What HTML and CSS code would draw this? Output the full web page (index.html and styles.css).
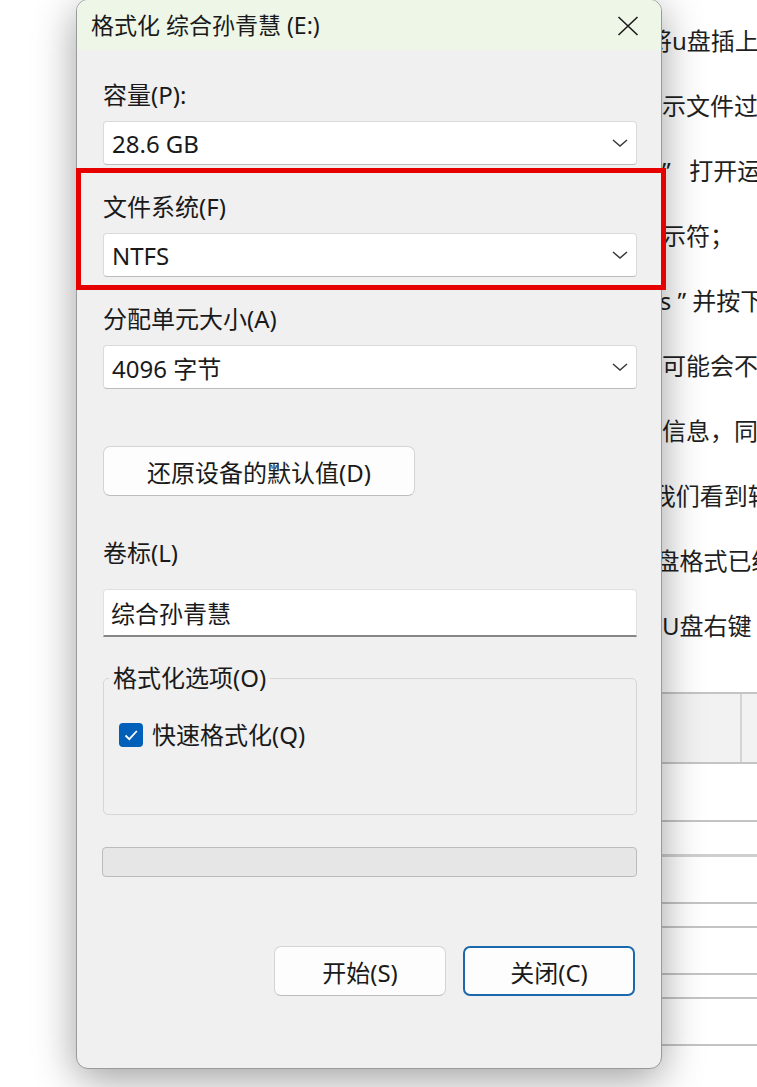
FILE: index.html
```html
<!DOCTYPE html>
<html lang="zh-CN">
<head>
  <meta charset="UTF-8">
  <meta name="viewport" content="width=device-width, initial-scale=1.0">
  <title>格式化 综合孙青慧 (E:)</title>
  <link rel="stylesheet" href="styles.css">
</head>
<body>
  <div class="article">
    <p class="line line--back">1 将u盘插上电脑</p>
    <p class="line">显示文件过程</p>
    <p class="line">命”&nbsp;&nbsp; 打开运行窗口</p>
    <p class="line">提示符；</p>
    <p class="line line--back">ntfs ” 并按下回车</p>
    <p class="line">时可能会不会</p>
    <p class="line">的信息，同时</p>
    <p class="line">2我们看到转换</p>
    <p class="line">U盘格式已经</p>
    <p class="line">击U盘右键</p>

    <div class="table">
      <div class="row row--head">
        <div class="cell"></div>
        <div class="cell cell--last"></div>
      </div>
      <div class="row row--first"></div>
      <div class="row row--second"></div>
      <div class="row row--tall"></div>
      <div class="row row--short"></div>
      <div class="row row--tall"></div>
      <div class="row row--short"></div>
      <div class="row row--tall"></div>
    </div>
  </div>

  <div class="dialog">
    <div class="titlebar">
      <span class="title">格式化 综合孙青慧 (E:)</span>
      <svg class="close" width="22" height="20" viewBox="0 0 22 20">
        <path d="M1.5 1 L20.5 19 M20.5 1 L1.5 19" stroke="#1c1c1c" stroke-width="1.6" fill="none"/>
      </svg>
    </div>

    <div class="body">
      <p class="label">容量(P):</p>
      <div class="select">
        <span>28.6 GB</span>
        <svg width="16" height="8" viewBox="0 0 16 8"><polyline points="1,1 8,7 15,1" fill="none" stroke="#3a3a3a" stroke-width="1.5"/></svg>
      </div>

      <p class="label">文件系统(F)</p>
      <div class="select">
        <span>NTFS</span>
        <svg width="16" height="8" viewBox="0 0 16 8"><polyline points="1,1 8,7 15,1" fill="none" stroke="#3a3a3a" stroke-width="1.5"/></svg>
      </div>

      <p class="label">分配单元大小(A)</p>
      <div class="select">
        <span>4096 字节</span>
        <svg width="16" height="8" viewBox="0 0 16 8"><polyline points="1,1 8,7 15,1" fill="none" stroke="#3a3a3a" stroke-width="1.5"/></svg>
      </div>

      <button class="btn btn--restore">还原设备的默认值(D)</button>

      <p class="label label--volume">卷标(L)</p>
      <div class="input">综合孙青慧</div>

      <fieldset class="options">
        <legend>格式化选项(O)</legend>
        <div class="check-row">
          <span class="checkbox">
            <svg width="24" height="24" viewBox="0 0 24 24"><path d="M6.5 12.5 L10.3 16.2 L17.8 8" fill="none" stroke="#fff" stroke-width="1.8"/></svg>
          </span>
          <span>快速格式化(Q)</span>
        </div>
      </fieldset>

      <div class="progress"></div>

      <div class="actions">
        <button class="btn btn--action">开始(S)</button>
        <button class="btn btn--action btn--default">关闭(C)</button>
      </div>
    </div>
  </div>

  <div class="highlight"></div>
</body>
</html>
```

FILE: styles.css
```css
body {
  margin: 0;
  height: 1087px;
  overflow: hidden;
  position: relative;
  background-color: #fff;
  font-family: "Noto Sans", "Noto Sans CJK SC", sans-serif;
  color: #1a1a1a;
}

p {
  margin: 0;
}

/* page behind the dialog */
.article {
  padding: 8px 0 0 638px;
  white-space: nowrap;
}

.line {
  font-size: 24px;
  line-height: 65px;
  color: #1f1f1f;
}

.line--back {
  margin-left: -10px;
}

.table {
  margin: 34px 0 0 -40px;
  border-top: 2px solid #c4c4c4;
}

.row {
  display: flex;
  border-bottom: 2px solid #c4c4c4;
}

.row--head {
  height: 68px;
  background-color: #f2f2f2;
}

.cell {
  width: 142px;
  border-right: 2px solid #d4d4d4;
}

.cell--last {
  flex: 1;
  border-right: none;
}

.row--first {
  height: 56px;
}

.row--second {
  height: 32px;
  border-bottom: 3px solid #cfcfcf;
}

.row--tall {
  height: 45px;
}

.row--short {
  height: 22px;
}

/* dialog */
.dialog {
  position: absolute;
  left: 76px;
  top: -1px;
  width: 586px;
  height: 1070px;
  box-sizing: border-box;
  border: 1px solid #9a9a9a;
  border-radius: 12px;
  background-color: #f0f0f0;
  box-shadow: 0 10px 42px rgba(0, 0, 0, 0.38);
  overflow: hidden;
}

.titlebar {
  height: 50px;
  display: flex;
  align-items: center;
  justify-content: space-between;
  padding: 0 22px 0 14px;
  background-color: #eef6e8;
}

.title {
  font-size: 23px;
  line-height: 30px;
  color: #1a1a1a;
}

.close {
  margin-top: 1px;
}

.body {
  padding: 29px 24px 0 26px;
}

.label {
  font-size: 24px;
  line-height: 32px;
  height: 32px;
  margin-bottom: 10px;
}

.select {
  height: 44px;
  box-sizing: border-box;
  display: flex;
  align-items: center;
  justify-content: space-between;
  padding: 0 8px;
  margin-bottom: 26px;
  background-color: #fff;
  border: 1px solid #dadada;
  border-bottom-color: #bcbcbc;
  border-radius: 4px;
  font-size: 24px;
}

.btn {
  font-family: inherit;
  font-size: 24px;
  color: #1a1a1a;
  background-color: #fdfdfd;
  border: 1px solid #d4d4d4;
  border-bottom-color: #bdbdbd;
  border-radius: 7px;
  height: 50px;
  padding: 0;
  cursor: pointer;
}

.btn--restore {
  display: block;
  width: 312px;
  margin-top: 57px;
}

.label--volume {
  margin-top: 41px;
  margin-bottom: 20px;
}

.input {
  height: 48px;
  box-sizing: border-box;
  padding: 0 7px;
  display: flex;
  align-items: center;
  font-size: 24px;
  background-color: #fff;
  border: 1px solid #e0e0e0;
  border-bottom: 2px solid #868686;
  border-radius: 4px 4px 0 0;
}

.options {
  margin: 25px 0 0;
  padding: 25px 0 63px 15px;
  border: 1px solid #d6d6d6;
  border-radius: 5px;
}

.options legend {
  font-size: 24px;
  line-height: 32px;
  padding: 0 4px;
  margin-left: -10px;
}

.check-row {
  display: flex;
  align-items: center;
  gap: 9px;
  font-size: 24px;
  line-height: 32px;
}

.checkbox {
  width: 24px;
  height: 24px;
  border-radius: 4px;
  background-color: #005fb8;
  display: flex;
}

.progress {
  margin-top: 32px;
  height: 30px;
  box-sizing: border-box;
  margin-left: -1px;
  background-color: #e6e6e6;
  border: 1px solid #bcbcbc;
  border-radius: 4px;
}

.actions {
  display: flex;
  justify-content: flex-end;
  gap: 17px;
  margin-top: 69px;
  padding-right: 2px;
}

.btn--action {
  width: 172px;
}

.btn--default {
  border: 2px solid #1c68ad;
}

/* red annotation frame */
.highlight {
  position: absolute;
  left: 76px;
  top: 168px;
  width: 590px;
  height: 122px;
  box-sizing: border-box;
  border: 5px solid #e60000;
}
```
